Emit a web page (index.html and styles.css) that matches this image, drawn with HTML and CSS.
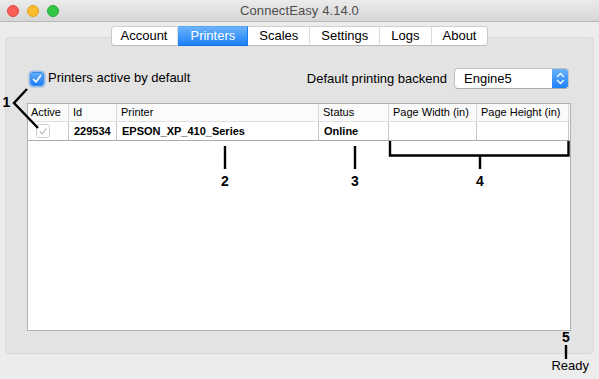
FILE: index.html
```html
<!DOCTYPE html>
<html lang="en">
<head>
<meta charset="utf-8">
<title>ConnectEasy 4.14.0</title>
<link rel="stylesheet" href="styles.css">
</head>
<body>
<div class="window">
  <header class="titlebar">
    <div class="lights">
      <span class="light red"></span>
      <span class="light yellow"></span>
      <span class="light green"></span>
    </div>
    <div class="title">ConnectEasy 4.14.0</div>
    <div></div>
  </header>

  <nav class="tabs">
    <div class="tab">Account</div>
    <div class="tab active">Printers</div>
    <div class="tab">Scales</div>
    <div class="tab">Settings</div>
    <div class="tab">Logs</div>
    <div class="tab">About</div>
  </nav>

  <section class="tabbox">
    <div class="options">
      <label class="check">
        <span class="checkbox">
          <svg width="14" height="14" viewBox="0 0 14 14"><path d="M3.6 7.4 L6 10 L10.6 3.6" fill="none" stroke="#fff" stroke-width="1.6" stroke-linecap="round" stroke-linejoin="round"/></svg>
        </span>
        <span class="check-label">Printers active by default</span>
      </label>
      <div class="backend">
        <span class="backend-label">Default printing backend</span>
        <div class="select">
          <span class="select-value">Engine5</span>
          <span class="select-btn">
            <svg width="17" height="21" viewBox="0 0 17 21"><path d="M5.5 8.5 L8.5 5.5 L11.5 8.5 M5.5 12.5 L8.5 15.5 L11.5 12.5" fill="none" stroke="#fff" stroke-width="1.3" stroke-linecap="round" stroke-linejoin="round"/></svg>
          </span>
        </div>
      </div>
    </div>

    <div class="table">
      <div class="thead">
        <div class="th">Active</div>
        <div class="th">Id</div>
        <div class="th">Printer</div>
        <div class="th">Status</div>
        <div class="th">Page Width (in)</div>
        <div class="th">Page Height (in)</div>
        <div class="th filler"></div>
      </div>
      <div class="trow">
        <div class="td td-check">
          <span class="row-checkbox">
            <svg width="13" height="13" viewBox="0 0 13 13"><path d="M3.4 6.8 L5.6 9.2 L9.8 3.4" fill="none" stroke="#bdbdbd" stroke-width="1.3" stroke-linecap="round" stroke-linejoin="round"/></svg>
          </span>
        </div>
        <div class="td bold">229534</div>
        <div class="td bold">EPSON_XP_410_Series</div>
        <div class="td bold">Online</div>
        <div class="td"></div>
        <div class="td"></div>
        <div class="td filler"></div>
      </div>
    </div>
  </section>

  <footer class="status">Ready</footer>

  <svg class="annotations" width="599" height="379" viewBox="0 0 599 379">
    <g fill="none" stroke="#000" stroke-width="2.4" stroke-linecap="butt">
      <path d="M27 89 L14 103 L38 128"/>
      <path d="M225 146 V169"/>
      <path d="M355 146 V169"/>
      <path d="M390 141 V155.5 H568.5 V141"/>
      <path d="M480 155.5 V169"/>
      <path d="M566 345 V359"/>
    </g>
    <g class="anno-text">
      <text x="6.5" y="107" text-anchor="middle">1</text>
      <text x="225" y="186" text-anchor="middle">2</text>
      <text x="355" y="186" text-anchor="middle">3</text>
      <text x="480" y="186" text-anchor="middle">4</text>
      <text x="566" y="342" text-anchor="middle">5</text>
    </g>
  </svg>
</div>
</body>
</html>
```

FILE: styles.css
```css
* {
  box-sizing: border-box;
}

html, body {
  margin: 0;
  padding: 0;
}

body {
  width: 599px;
  height: 379px;
  overflow: hidden;
  background: #ececec;
  font-family: "Liberation Sans", Arial, sans-serif;
  font-size: 13px;
  color: #000;
}

.window {
  position: relative;
  width: 599px;
  height: 379px;
  display: flex;
  flex-direction: column;
}

/* Title bar */
.titlebar {
  height: 22px;
  flex: none;
  display: grid;
  grid-template-columns: 1fr auto 1fr;
  align-items: center;
  background: linear-gradient(#ebebeb, #d6d6d6);
  border-bottom: 1px solid #b8b8b8;
}

.lights {
  display: flex;
  gap: 8px;
  padding-left: 7px;
}

.light {
  width: 12px;
  height: 12px;
  border-radius: 50%;
  display: block;
}

.light.red {
  background: #fc5f57;
  border: 1px solid #e0443e;
}

.light.yellow {
  background: #fdbc2e;
  border: 1px solid #dea123;
}

.light.green {
  background: #33c748;
  border: 1px solid #27a935;
}

.title {
  font-size: 13px;
  color: #4d4d4d;
  line-height: 16px;
  letter-spacing: 0.1px;
}

/* Tabs */
.tabs {
  position: relative;
  z-index: 1;
  display: flex;
  justify-content: center;
  margin-top: 4px;
  margin-bottom: -9px;
  height: 20px;
}

.tab {
  height: 20px;
  line-height: 18px;
  padding: 0 11px;
  background: #fff;
  border-top: 1px solid #cfcfcf;
  border-bottom: 1px solid #b9b9b9;
  border-right: 1px solid #dcdcdc;
  color: #000;
  font-size: 13px;
}

.tab:first-child {
  border-left: 1px solid #c8c8c8;
  border-radius: 4px 0 0 4px;
  padding-left: 9px;
  padding-right: 10px;
}

.tab:last-child {
  border-right: 1px solid #c8c8c8;
  border-radius: 0 4px 4px 0;
}

.tab.active {
  background: linear-gradient(#6cb3fa, #1a80fa);
  border-top-color: #5aa6f6;
  border-bottom-color: #1670e6;
  border-right-color: #1a7cf0;
  color: #fff;
  padding: 0 12px;
}

/* Tab box */
.tabbox {
  flex: none;
  height: 317px;
  margin: 0 5px;
  background: #e3e3e3;
  border: 1px solid #d9d9d9;
  border-radius: 4px;
  padding: 30px 22px 22px 21px;
  display: flex;
  flex-direction: column;
  gap: 14px;
}

.options {
  height: 21px;
  display: flex;
  align-items: center;
  padding-left: 2px;
  padding-right: 2px;
}

.check {
  display: flex;
  align-items: center;
  gap: 4px;
}

.checkbox {
  width: 14px;
  height: 14px;
  border-radius: 3px;
  background: linear-gradient(#66aef9, #1c7ef9);
  border: 1px solid #3a8ee8;
  box-shadow: 0 0 0 1.5px rgba(92, 156, 238, 0.55);
  display: flex;
  align-items: center;
  justify-content: center;
  margin-left: 1px;
}

.checkbox svg {
  display: block;
  margin: -1px;
}

.check-label {
  line-height: 16px;
  margin-top: -2px;
}

.backend {
  margin-left: auto;
  display: flex;
  align-items: center;
  gap: 7px;
}

.backend-label {
  line-height: 16px;
}

.select {
  width: 115px;
  height: 21px;
  display: flex;
  background: #fff;
  border: 1px solid #c3c3c3;
  border-bottom-color: #adadad;
  border-radius: 4px;
  overflow: hidden;
}

.select-value {
  flex: 1;
  padding-left: 9px;
  line-height: 19px;
  font-size: 13px;
}

.select-btn {
  width: 17px;
  margin: -1px -1px -1px 0;
  background: linear-gradient(#6cb3fa, #1a80fa);
  border-radius: 0 4px 4px 0;
  display: flex;
}

.select-btn svg {
  display: block;
}

/* Table */
.table {
  height: 228px;
  background: #fff;
  border: 1px solid #b2b2b2;
  display: flex;
  flex-direction: column;
}

.thead,
.trow {
  display: grid;
  grid-template-columns: 41px 48px 202px 70px 88px 92px 1fr;
}

.thead {
  height: 18px;
  border-bottom: 1px solid #e0e0e0;
  background: #fbfbfb;
}

.th {
  font-size: 11px;
  line-height: 17px;
  padding-left: 4px;
  border-right: 1px solid #dadada;
  white-space: nowrap;
}

.th:first-child {
  padding-left: 3px;
}

.th.filler,
.td.filler {
  border-right: none;
}

.trow {
  height: 19px;
  border-bottom: 1px solid #adadad;
}

.td {
  font-size: 11px;
  line-height: 18px;
  padding-left: 5px;
  border-right: 1px solid #c6c6c6;
  white-space: nowrap;
}

.td.bold {
  font-weight: bold;
}

.td-check {
  display: flex;
  align-items: center;
  padding-left: 8px;
}

.row-checkbox {
  width: 14px;
  height: 14px;
  border: 1px solid #cfcfcf;
  border-radius: 3px;
  background: #fff;
  display: flex;
  align-items: center;
  justify-content: center;
}

.row-checkbox svg {
  display: block;
}

/* Status bar */
.status {
  margin-top: 4px;
  line-height: 16px;
  text-align: right;
  padding-right: 10px;
  font-size: 13px;
}

/* Annotation overlay */
.annotations {
  position: absolute;
  left: 0;
  top: 0;
  pointer-events: none;
}

.anno-text text {
  font-family: "Liberation Sans", Arial, sans-serif;
  font-weight: bold;
  font-size: 14px;
  fill: #000;
}
```
